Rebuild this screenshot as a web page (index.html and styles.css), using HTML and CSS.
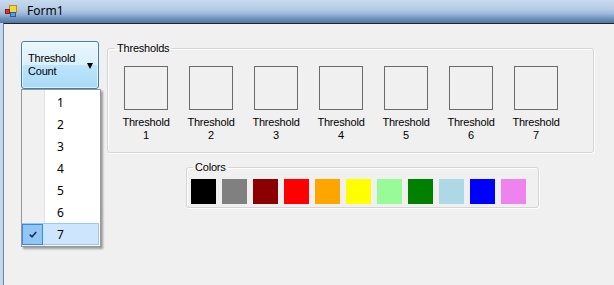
FILE: index.html
```html
<!DOCTYPE html>
<html lang="en">
<head>
    <meta charset="UTF-8">
    <title>Form1</title>
    <link rel="stylesheet" href="styles.css">
</head>
<body>
    <div class="window">
        <div class="titlebar">
            <svg class="app-icon" width="13" height="12" viewBox="0 0 13 12">
                <rect x="4.5" y="0.5" width="7" height="7" fill="#f6d43c" stroke="#b8901c"/>
                <rect x="0.5" y="4.5" width="4" height="4" fill="#e2321e" stroke="#8e1c10"/>
                <rect x="5.5" y="7.5" width="5" height="4" fill="#5c9ee2" stroke="#285c98"/>
            </svg>
            <span class="title">Form1</span>
        </div>

        <div class="frame">
            <div class="client">
                <div class="picker">
                    <button class="drop-button">
                        <span class="drop-label">Threshold<br>Count</span>
                        <span class="arrow"></span>
                    </button>
                    <ul class="menu">
                        <li class="menu-item"><span class="check"></span>1</li>
                        <li class="menu-item"><span class="check"></span>2</li>
                        <li class="menu-item"><span class="check"></span>3</li>
                        <li class="menu-item"><span class="check"></span>4</li>
                        <li class="menu-item"><span class="check"></span>5</li>
                        <li class="menu-item"><span class="check"></span>6</li>
                        <li class="menu-item selected">
                            <span class="check">
                                <svg width="8" height="7" viewBox="0 0 8 7">
                                    <path d="M0.8 3.6 L3 5.8 L7.2 1" fill="none" stroke="#15305e" stroke-width="1.6"/>
                                </svg>
                            </span>7
                        </li>
                    </ul>
                </div>

                <div class="groups">
                    <fieldset class="group thresholds">
                        <legend>Thresholds</legend>
                        <div class="threshold-row">
                            <div class="threshold"><div class="threshold-box"></div><div class="threshold-label">Threshold<br>1</div></div>
                            <div class="threshold"><div class="threshold-box"></div><div class="threshold-label">Threshold<br>2</div></div>
                            <div class="threshold"><div class="threshold-box"></div><div class="threshold-label">Threshold<br>3</div></div>
                            <div class="threshold"><div class="threshold-box"></div><div class="threshold-label">Threshold<br>4</div></div>
                            <div class="threshold"><div class="threshold-box"></div><div class="threshold-label">Threshold<br>5</div></div>
                            <div class="threshold"><div class="threshold-box"></div><div class="threshold-label">Threshold<br>6</div></div>
                            <div class="threshold"><div class="threshold-box"></div><div class="threshold-label">Threshold<br>7</div></div>
                        </div>
                    </fieldset>

                    <fieldset class="group colors">
                        <legend>Colors</legend>
                        <div class="swatch-row">
                            <div class="swatch black"></div>
                            <div class="swatch gray"></div>
                            <div class="swatch darkred"></div>
                            <div class="swatch red"></div>
                            <div class="swatch orange"></div>
                            <div class="swatch yellow"></div>
                            <div class="swatch palegreen"></div>
                            <div class="swatch green"></div>
                            <div class="swatch lightblue"></div>
                            <div class="swatch blue"></div>
                            <div class="swatch violet"></div>
                        </div>
                    </fieldset>
                </div>
            </div>
        </div>
    </div>
</body>
</html>
```

FILE: styles.css
```css
* {
    box-sizing: border-box;
}
body {
    margin: 0;
    font-family: "Liberation Sans", Arial, sans-serif;
    font-size: 11px;
    color: #000;
    background: #c4d7ec;
    overflow: hidden;
}
.window {
    display: flex;
    flex-direction: column;
    height: 285px;
}
.titlebar {
    height: 23px;
    display: flex;
    align-items: center;
    padding-left: 5px;
    background: linear-gradient(to bottom, #c8d9ed 0, #b6cce6 9px, #9bb7da 14px, #7496c0 18px, #52749c 23px);
}
.app-icon {
    margin-top: -1px;
}
.title {
    margin-left: 9px;
    font-family: "Noto Sans", sans-serif;
    font-size: 12px;
    margin-top: -2px;
}
.frame {
    flex: 1;
    display: flex;
    padding-left: 3px;
    background: #c4d7ec;
}
.client {
    flex: 1;
    display: flex;
    align-items: flex-start;
    gap: 8px;
    padding: 17px 0 0 17px;
    background: #f0f0f0;
    border-left: 1px solid #6a86a8;
    border-top: 1px solid #1c2534;
}

/* threshold count button + its drop down */
.picker {
    position: relative;
    width: 78px;
}
.drop-button {
    width: 78px;
    height: 48px;
    display: flex;
    align-items: center;
    justify-content: space-between;
    padding: 0 5px 0 6px;
    margin: 0;
    border: 1px solid #3c7fb1;
    border-radius: 3px;
    background: linear-gradient(to bottom, #eaf6fd 0, #d9f0fc 50%, #bee6fd 50%, #a7d9f5 100%);
    box-shadow: inset 0 0 0 1px rgba(255,255,255,0.6);
    font-family: "Liberation Sans", Arial, sans-serif;
    font-size: 11px;
    letter-spacing: -0.2px;
    line-height: 13px;
    text-align: left;
    color: #000;
}
.arrow {
    width: 0;
    height: 0;
    border-left: 3.5px solid transparent;
    border-right: 3.5px solid transparent;
    border-top: 6px solid #000;
    margin-top: 1px;
}
.menu {
    position: absolute;
    top: 48px;
    left: 0;
    width: 80px;
    margin: 0;
    padding: 1px 1px 1px 0;
    list-style: none;
    border: 1px solid #979797;
    background: linear-gradient(to right, #f1f1f1 0, #f1f1f1 22px, #e2e3e3 22px, #e2e3e3 23px, #fff 23px);
    box-shadow: 2px 2px 2px rgba(0,0,0,0.35);
    font-family: "Noto Sans", sans-serif;
    font-size: 12px;
}
.menu-item {
    height: 22px;
    display: flex;
    align-items: center;
}
.check {
    width: 22px;
    height: 22px;
    margin-right: 13px;
    display: flex;
    align-items: center;
    justify-content: center;
}
.menu-item.selected {
    background: #cde6fd;
    box-shadow: inset 0 0 0 1px #99c8f0;
}
.menu-item.selected .check {
    width: 21px;
    height: 21px;
    margin-right: 14px;
    background: #93c6f4;
    border: 1px solid #3a8ae0;
}

/* group boxes */
.groups {
    display: flex;
    flex-direction: column;
}
.group {
    margin: 0;
    min-width: 0;
    border: 1px solid #d5d5d5;
    border-radius: 3px;
    box-shadow: inset 1px 1px 0 #fff, 1px 1px 0 #fff;
}
.group legend {
    padding: 0 2px;
    line-height: 14px;
    letter-spacing: -0.2px;
}
.thresholds {
    width: 487px;
    padding: 11px 6px 10px 6px;
}
.thresholds legend {
    margin-left: 1px;
}
.threshold-row {
    display: flex;
    gap: 1px;
}
.threshold {
    width: 64px;
    display: flex;
    flex-direction: column;
    align-items: center;
}
.threshold-box {
    width: 44px;
    height: 44px;
    border: 1px solid #6b6b6b;
}
.threshold-label {
    margin-top: 6px;
    line-height: 13px;
    text-align: center;
    white-space: nowrap;
    letter-spacing: -0.2px;
}
.colors {
    width: 353px;
    margin-left: 79px;
    margin-top: 7px;
    padding: 5px 4px 3px 4px;
}
.colors legend {
    margin-left: 2px;
}
.swatch-row {
    display: flex;
    gap: 6px;
}
.swatch {
    width: 25px;
    height: 25px;
}
.black { background: #000; }
.gray { background: #808080; }
.darkred { background: #8b0000; }
.red { background: #ff0000; }
.orange { background: #ffa500; }
.yellow { background: #ffff00; }
.palegreen { background: #98fb98; }
.green { background: #008000; }
.lightblue { background: #add8e6; }
.blue { background: #0000ff; }
.violet { background: #ee82ee; }
```
